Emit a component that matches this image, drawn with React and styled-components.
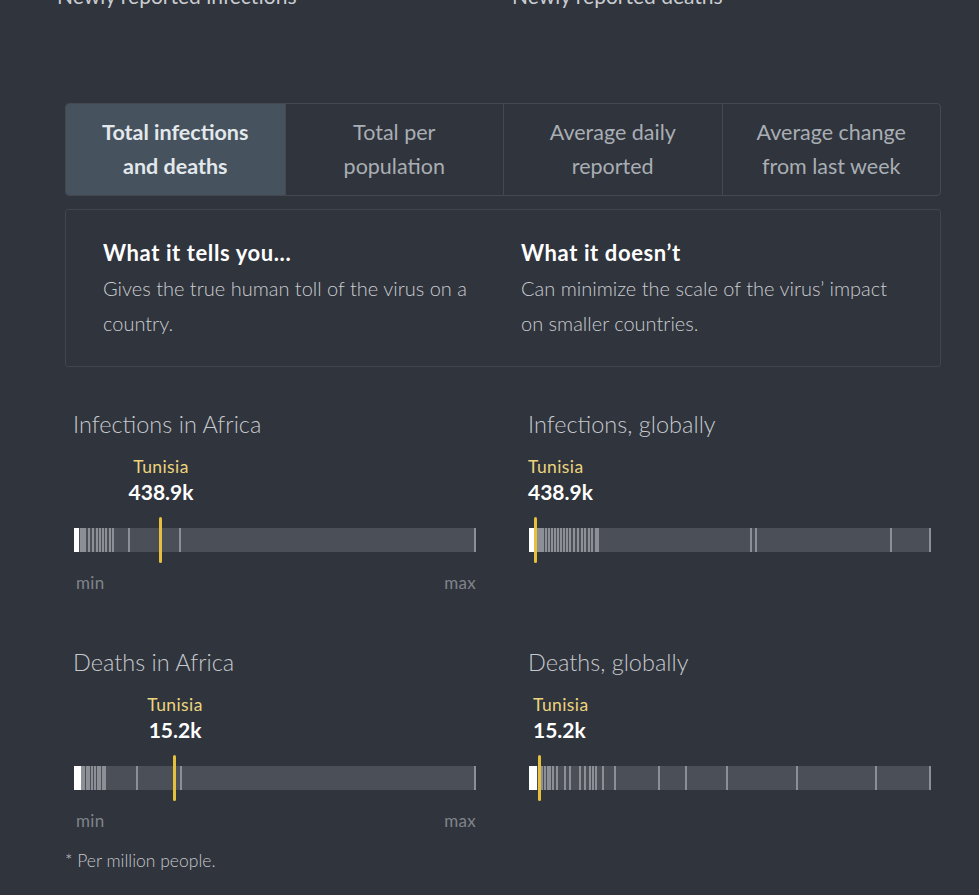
import styled, { createGlobalStyle } from "styled-components";

const GlobalStyle = createGlobalStyle`
	body {
		margin: 0;
		background: #30343c;
		font-family: "Lato", "Open Sans", sans-serif;
		color: #e6e8eb;
	}
`;

const Page = styled.div`
	width: 979px;
	min-height: 895px;
	overflow: hidden;
`;

const TopStrip = styled.div`
	height: 15px;
	overflow: hidden;
	display: grid;
	grid-template-columns: 455px 1fr;
	padding-left: 57px;
`;

const TopLabel = styled.div`
	margin-top: -17px;
	font-size: 21px;
	line-height: 26px;
	color: #c9ccd1;
`;

const Content = styled.div`
	width: 876px;
	margin: 88px 0 0 65px;
`;

const Tabs = styled.div`
	display: grid;
	grid-template-columns: repeat(4, 1fr);
	border: 1px solid #444951;
	border-radius: 4px;
	overflow: hidden;
`;

const Tab = styled.button`
	all: unset;
	box-sizing: border-box;
	padding: 11px 6px 12px;
	text-align: center;
	font-family: inherit;
	font-size: 21.5px;
	line-height: 34px;
	font-weight: ${(p) => (p.$active ? 700 : 400)};
	color: ${(p) => (p.$active ? "#e3e8ec" : "#a9aeb4")};
	background: ${(p) => (p.$active ? "#46525d" : "transparent")};
	border-left: 1px solid #444951;

	&:first-child {
		border-left: none;
	}
`;

const InfoBox = styled.div`
	margin-top: 13px;
	border: 1px solid #41464e;
	border-radius: 3px;
	padding: 29px 37px 25px;
	display: grid;
	grid-template-columns: 400px 400px;
	column-gap: 18px;
`;

const InfoTitle = styled.div`
	font-size: 22px;
	line-height: 28px;
	font-weight: 700;
	letter-spacing: 0.6px;
	color: #ffffff;
`;

const InfoText = styled.div`
	margin-top: 4px;
	font-size: 20px;
	line-height: 35px;
	font-weight: 300;
	color: #c9ccd1;
	max-width: 385px;
`;

const Charts = styled.div`
	margin-top: 43px;
	margin-left: 9px;
	display: grid;
	grid-template-columns: 455px 402px;
	row-gap: 55px;
`;

const Chart = styled.div`
	width: 402px;
`;

const ChartTitle = styled.div`
	font-size: 23.5px;
	line-height: 28px;
	font-weight: 300;
	color: #c6c9ce;
	margin-left: -1px;
`;

const LabelAnchor = styled.div`
	margin-top: 19px;
	display: flex;
	flex-direction: column;
	align-items: ${(p) => (p.$centered ? "center" : "flex-start")};
	width: ${(p) => (p.$centered ? "0" : "auto")};
	white-space: nowrap;
`;

const Country = styled.div`
	font-size: 17.5px;
	line-height: 20px;
	letter-spacing: 0.4px;
	color: #ecd57c;
`;

const Value = styled.div`
	margin-top: 1px;
	font-size: 21px;
	line-height: 28px;
	font-weight: 700;
	color: #ffffff;
`;

const Track = styled.div`
	position: relative;
	margin-top: 11px;
	padding: 11px 0;
`;

const Bar = styled.div`
	position: relative;
	height: 24px;
	background: #4b4f57;
`;

const Tick = styled.span`
	position: absolute;
	top: 0;
	bottom: 0;
	width: 2px;
	background: rgba(220, 223, 228, 0.45);
`;

const Solid = styled.span`
	position: absolute;
	top: 0;
	bottom: 0;
	left: 0;
	background: #ffffff;
`;

const Marker = styled.span`
	position: absolute;
	top: 0;
	bottom: 0;
	width: 3px;
	margin-left: -1px;
	border-radius: 2px;
	background: #e6c03c;
`;

const Scale = styled.div`
	margin-top: 10px;
	display: flex;
	justify-content: space-between;
	font-size: 17px;
	line-height: 20px;
	letter-spacing: 0.3px;
	color: #7f848b;
	padding: 0 0 0 2px;
`;

const Footnote = styled.div`
	margin-top: 20px;
	font-size: 17.5px;
	line-height: 20px;
	font-weight: 300;
	color: #c3c6cb;
`;

const tabs = [
	["Total infections", "and deaths"],
	["Total per", "population"],
	["Average daily", "reported"],
	["Average change", "from last week"],
];

const charts = [
	{
		title: "Infections in Africa",
		value: "438.9k",
		marker: 86,
		label: 87,
		centered: true,
		solid: 5,
		ticks: [6, 8, 10, 14, 18, 22, 25, 28, 31, 35, 38, 54, 105, 400],
		scale: true,
	},
	{
		title: "Infections, globally",
		value: "438.9k",
		marker: 6,
		label: -1,
		solid: 6,
		ticks: [
			7, 9, 11, 13, 16, 19, 22, 25, 28, 31, 34, 37, 40, 44, 48, 52, 55, 59,
			62, 66, 68, 221, 226, 361, 400,
		],
	},
	{
		title: "Deaths in Africa",
		value: "15.2k",
		marker: 100,
		label: 101,
		centered: true,
		solid: 7,
		ticks: [7, 9, 12, 14, 17, 20, 23, 25, 28, 30, 62, 106, 400],
		scale: true,
	},
	{
		title: "Deaths, globally",
		value: "15.2k",
		marker: 10,
		label: 4,
		solid: 8,
		ticks: [
			12, 15, 18, 20, 23, 27, 35, 40, 50, 55, 60, 63, 66, 73, 85, 129, 156,
			197, 267, 346, 400,
		],
	},
];

function RangeChart({ chart }) {
	return (
		<Chart>
			<ChartTitle>{chart.title}</ChartTitle>
			<LabelAnchor $centered={chart.centered} style={{ marginLeft: chart.label }}>
				<Country>Tunisia</Country>
				<Value>{chart.value}</Value>
			</LabelAnchor>
			<Track>
				<Bar>
					<Solid style={{ width: chart.solid }} />
					{chart.ticks.map((t) => (
						<Tick key={t} style={{ left: t }} />
					))}
				</Bar>
				<Marker style={{ left: chart.marker }} />
			</Track>
			{chart.scale && (
				<Scale>
					<span>min</span>
					<span>max</span>
				</Scale>
			)}
		</Chart>
	);
}

export default function App() {
	return (
		<Page>
			<GlobalStyle />
			<TopStrip>
				<TopLabel>Newly reported infections</TopLabel>
				<TopLabel>Newly reported deaths</TopLabel>
			</TopStrip>
			<Content>
				<Tabs>
					{tabs.map((t, i) => (
						<Tab key={t[0]} $active={i === 0}>
							{t[0]}
							<br />
							{t[1]}
						</Tab>
					))}
				</Tabs>
				<InfoBox>
					<div>
						<InfoTitle>What it tells you...</InfoTitle>
						<InfoText>Gives the true human toll of the virus on a country.</InfoText>
					</div>
					<div>
						<InfoTitle>What it doesn’t</InfoTitle>
						<InfoText>Can minimize the scale of the virus’ impact on smaller countries.</InfoText>
					</div>
				</InfoBox>
				<Charts>
					{charts.map((c) => (
						<RangeChart key={c.title} chart={c} />
					))}
				</Charts>
				<Footnote>* Per million people.</Footnote>
			</Content>
		</Page>
	);
}
